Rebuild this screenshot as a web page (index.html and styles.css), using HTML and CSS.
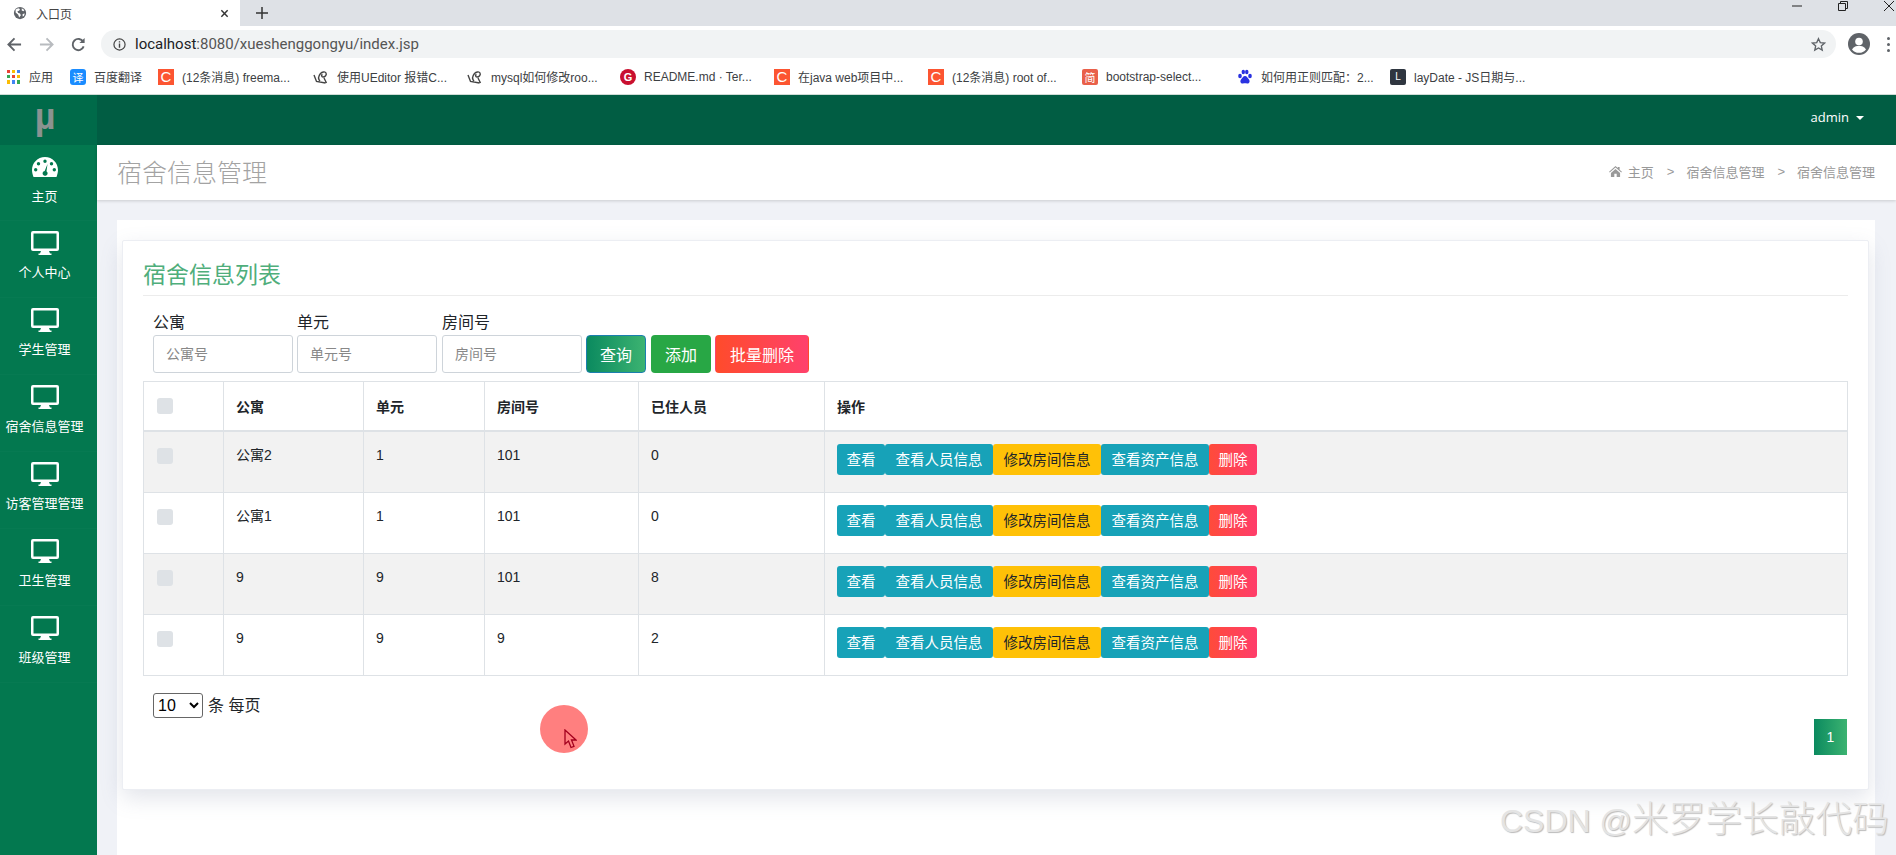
FILE: index.html
```html
<!DOCTYPE html>
<html lang="zh-CN">
<head>
    <meta charset="UTF-8">
    <title>入口页</title>
    <link rel="stylesheet" href="styles.css">
</head>
<body>
    <svg class="defs" width="0" height="0">
        <symbol id="monitor" viewBox="0 0 28 24">
            <path fill="#fff" d="M2 0h24a2 2 0 0 1 2 2v16a2 2 0 0 1-2 2H18l1 2.500h1.500V24h-13v-1.500H9l1-2.500H2a2 2 0 0 1-2-2V2a2 2 0 0 1 2-2zm.5 2.500v15h23v-15z"/>
        </symbol>
    </svg>

    <!-- barra del navegador -->
    <div class="tabstrip">
        <div class="tab">
            <svg class="globe" viewBox="0 0 16 16"><circle cx="8" cy="8" r="7" fill="#5f6368"/><path fill="#fff" d="M3 4l3-1.500 2 1-1 2-2 .5 1 2 2 .5 1 2-2 2.500-1-3-3-2.500zM10 2.500l3 2-1 1.500-2-1zM11 9l2.500-.5-1 3-1.500.5z"/></svg>
            <span class="tab-title">入口页</span>
            <svg class="tab-x" viewBox="0 0 10 10"><path d="M1.500 1.500l7 7m0-7l-7 7" stroke="#333" stroke-width="1.600"/></svg>
        </div>
        <svg class="tab-plus" viewBox="0 0 12 12"><path d="M6 0v12M0 6h12" stroke="#333" stroke-width="1.500"/></svg>
        <div class="win-btns">
            <svg viewBox="0 0 12 12"><path d="M1 6h10" stroke="#222" stroke-width="1"/></svg>
            <svg viewBox="0 0 12 12"><path d="M1.500 3.500h7v7h-7zM3.500 3.500v-2h7v7h-2" fill="none" stroke="#222" stroke-width="1"/></svg>
            <svg viewBox="0 0 12 12"><path d="M1 1l10 10m0-10L1 11" stroke="#222" stroke-width="1"/></svg>
        </div>
    </div>
    <div class="toolbar">
        <svg class="nav-icon" viewBox="0 0 16 16"><path d="M15 8H2m6-6.500L1.500 8 8 14.500" fill="none" stroke="#5f6368" stroke-width="2"/></svg>
        <svg class="nav-icon" viewBox="0 0 16 16"><path d="M1 8h13M8 1.500L14.500 8 8 14.500" fill="none" stroke="#b8bbbf" stroke-width="2"/></svg>
        <svg class="nav-icon" viewBox="0 0 16 16"><path d="M13.500 10a6 6 0 1 1-.5-5" fill="none" stroke="#5f6368" stroke-width="2"/><path fill="#5f6368" d="M14.500 1v5.500H9z"/></svg>
        <div class="omnibox">
            <svg class="info" viewBox="0 0 14 14"><circle cx="7" cy="7" r="6" fill="none" stroke="#444" stroke-width="1.300"/><path d="M7 6v4.500M7 3.500v1.300" stroke="#444" stroke-width="1.500"/></svg>
            <span class="url"><b>localhost</b>:8080/xueshenggongyu/index.jsp</span>
            <svg class="star" viewBox="0 0 16 16"><path d="M8 1.800l1.900 4.200 4.500.5-3.400 3 1 4.500L8 11.700 4 14l1-4.500-3.400-3 4.500-.5z" fill="none" stroke="#5f6368" stroke-width="1.400"/></svg>
        </div>
        <svg class="avatar" viewBox="0 0 22 22"><circle cx="11" cy="11" r="11" fill="#5f6368"/><circle cx="11" cy="8.500" r="3.800" fill="#fff"/><path fill="#fff" d="M4 16.500c1.500-3 4.500-3.800 7-3.800s5.500.8 7 3.800a9 9 0 0 1-14 0z"/></svg>
        <div class="dots"><i></i><i></i><i></i></div>
    </div>
    <div class="bookmarks">
        <div class="bm bm-apps">
            <div class="apps"><i class="r"></i><i class="y"></i><i class="b"></i><i class="g"></i><i class="r"></i><i class="y"></i><i class="y"></i><i class="b"></i><i class="g"></i></div>
            <span>应用</span>
        </div>
        <div class="bm"><span class="fav fav-blue">译</span><span>百度翻译</span></div>
        <div class="bm"><span class="fav fav-c">C</span><span>(12条消息) freema...</span></div>
        <div class="bm"><svg class="swirl" viewBox="0 0 16 16"><path d="M1 6l2.500 6.500 9 1.500M7 12c-2-2-1.500-5 .5-7.500C9 3 12 2 13 4c1 2-1 4-3 4-1.500 0-2-2-.5-2.500M11 9l2.500 5" fill="none" stroke="#444" stroke-width="1.400"/></svg><span>使用UEditor 报错C...</span></div>
        <div class="bm"><svg class="swirl" viewBox="0 0 16 16"><path d="M1 6l2.500 6.500 9 1.500M7 12c-2-2-1.500-5 .5-7.500C9 3 12 2 13 4c1 2-1 4-3 4-1.500 0-2-2-.5-2.500M11 9l2.500 5" fill="none" stroke="#444" stroke-width="1.400"/></svg><span>mysql如何修改roo...</span></div>
        <div class="bm"><span class="fav fav-g">G</span><span>README.md · Ter...</span></div>
        <div class="bm"><span class="fav fav-c">C</span><span>在java web项目中...</span></div>
        <div class="bm"><span class="fav fav-c">C</span><span>(12条消息) root of...</span></div>
        <div class="bm"><span class="fav fav-jian">简</span><span>bootstrap-select...</span></div>
        <div class="bm"><svg class="paw" viewBox="0 0 16 16"><g fill="#2932e1"><ellipse cx="3" cy="7" rx="1.800" ry="2.300"/><ellipse cx="6.300" cy="3" rx="1.700" ry="2.300"/><ellipse cx="9.800" cy="3" rx="1.700" ry="2.300"/><ellipse cx="13" cy="7" rx="1.800" ry="2.300"/><path d="M8 7c2 0 2.500 2 4 3.500 1.500 2 0 4.500-2 4-1-.2-3-.2-4 0-2 .5-3.500-2-2-4C5.500 9 6 7 8 7z"/></g></svg><span>如何用正则匹配：2...</span></div>
        <div class="bm"><span class="fav fav-lay">L</span><span>layDate - JS日期与...</span></div>
    </div>

    <!-- sistema -->
    <div class="app">
        <div class="logo">µ</div>
        <div class="topbar">
            <span class="admin">admin</span>
            <span class="caret"></span>
        </div>
        <nav class="sidebar">
            <a class="side-item">
                <svg class="side-icon" viewBox="0 0 28 24"><path fill="#fff" fill-rule="evenodd" d="M14 2C6.500 2 1 8 1 15c0 2.500.7 4.700 1.500 7h23c.8-2.300 1.500-4.500 1.500-7 0-7-5.500-13-13-13zM14 4.500a1.700 1.700 0 1 1 0 3.400 1.700 1.700 0 0 1 0-3.400zM7.500 7a1.700 1.700 0 1 1 0 3.400 1.700 1.700 0 0 1 0-3.400zM20.500 7a1.700 1.700 0 1 1 0 3.400 1.700 1.700 0 0 1 0-3.400zM4.700 13a1.700 1.700 0 1 1 0 3.400 1.700 1.700 0 0 1 0-3.400zM23.300 13a1.700 1.700 0 1 1 0 3.400 1.700 1.700 0 0 1 0-3.400zM16.500 9l-1 7.200c1 .8 1.300 1.800 1 2.800-.4 1.500-1.800 2-3 1.700-1.500-.4-2.200-1.700-1.800-3 .3-1 1.200-1.700 2-1.800z"/></svg>
                <span>主页</span>
            </a>
            <a class="side-item"><svg class="side-icon"><use href="#monitor"/></svg><span>个人中心</span></a>
            <a class="side-item"><svg class="side-icon"><use href="#monitor"/></svg><span>学生管理</span></a>
            <a class="side-item"><svg class="side-icon"><use href="#monitor"/></svg><span>宿舍信息管理</span></a>
            <a class="side-item"><svg class="side-icon"><use href="#monitor"/></svg><span>访客管理管理</span></a>
            <a class="side-item"><svg class="side-icon"><use href="#monitor"/></svg><span>卫生管理</span></a>
            <a class="side-item"><svg class="side-icon"><use href="#monitor"/></svg><span>班级管理</span></a>
        </nav>
        <main class="main">
            <div class="page-head">
                <h1 class="page-title">宿舍信息管理</h1>
                <div class="crumbs">
                    <svg class="home" viewBox="0 0 14 12"><path fill="#999" d="M7 0l2.500 2.200V1h2v3l2.500 2.300-.7.700L7 1.700 .7 7 0 6.300zM2 7.500L7 3.200l5 4.300V12H8.300V8.500H5.700V12H2z"/></svg>
                    <span>主页</span><span class="sep">&gt;</span><span>宿舍信息管理</span><span class="sep">&gt;</span><span>宿舍信息管理</span>
                </div>
            </div>
            <div class="panel">
                <div class="card">
                    <h2 class="card-title">宿舍信息列表</h2>
                    <form class="search">
                        <label class="field">公寓<input placeholder="公寓号"></label>
                        <label class="field">单元<input placeholder="单元号"></label>
                        <label class="field">房间号<input placeholder="房间号"></label>
                        <button type="button" class="btn btn-query">查询</button>
                        <button type="button" class="btn btn-add">添加</button>
                        <button type="button" class="btn btn-del">批量删除</button>
                    </form>
                    <table class="tabla">
                        <thead>
                            <tr>
                                <th class="c-check"><span class="check"></span></th>
                                <th class="c-a">公寓</th>
                                <th class="c-b">单元</th>
                                <th class="c-c">房间号</th>
                                <th class="c-d">已住人员</th>
                                <th>操作</th>
                            </tr>
                        </thead>
                        <tbody>
                            <tr>
                                <td><span class="check"></span></td><td>公寓2</td><td>1</td><td>101</td><td>0</td>
                                <td class="ops"><div class="op-row"><a class="op op-info">查看</a><a class="op op-info wide">查看人员信息</a><a class="op op-warn wide">修改房间信息</a><a class="op op-info wide">查看资产信息</a><a class="op op-del">删除</a></div></td>
                            </tr>
                            <tr>
                                <td><span class="check"></span></td><td>公寓1</td><td>1</td><td>101</td><td>0</td>
                                <td class="ops"><div class="op-row"><a class="op op-info">查看</a><a class="op op-info wide">查看人员信息</a><a class="op op-warn wide">修改房间信息</a><a class="op op-info wide">查看资产信息</a><a class="op op-del">删除</a></div></td>
                            </tr>
                            <tr>
                                <td><span class="check"></span></td><td>9</td><td>9</td><td>101</td><td>8</td>
                                <td class="ops"><div class="op-row"><a class="op op-info">查看</a><a class="op op-info wide">查看人员信息</a><a class="op op-warn wide">修改房间信息</a><a class="op op-info wide">查看资产信息</a><a class="op op-del">删除</a></div></td>
                            </tr>
                            <tr>
                                <td><span class="check"></span></td><td>9</td><td>9</td><td>9</td><td>2</td>
                                <td class="ops"><div class="op-row"><a class="op op-info">查看</a><a class="op op-info wide">查看人员信息</a><a class="op op-warn wide">修改房间信息</a><a class="op op-info wide">查看资产信息</a><a class="op op-del">删除</a></div></td>
                            </tr>
                        </tbody>
                    </table>
                    <div class="table-foot">
                        <div class="per-page">
                            <select class="size"><option>10</option></select>
                            <span>条 每页</span>
                        </div>
                        <a class="page-num">1</a>
                    </div>
                </div>
            </div>
        </main>
    </div>

    <div class="click-mark">
        <svg class="pointer" viewBox="0 0 13 20"><path d="M1 1v14l3.500-3 2.500 6.500 3-1.200-2.500-6.300H12z" fill="#ff8080" stroke="#a3001e" stroke-width="1.300"/></svg>
    </div>
    <div class="watermark"><span class="wm-latin">CSDN @</span>米罗学长敲代码</div>
</body>
</html>
```

FILE: styles.css
```css
* {
    box-sizing: border-box;
}
body {
    margin: 0;
    height: 855px;
    overflow: hidden;
    position: relative;
    display: flex;
    flex-direction: column;
    background: #fff;
    font-family: "Liberation Sans", "Noto Sans CJK SC", sans-serif;
    font-size: 14px;
    color: #212529;
}
.defs {
    position: absolute;
}
/* navegador */
.tabstrip {
    height: 26px;
    background: #dee1e6;
    display: flex;
    align-items: center;
}
.tab {
    width: 240px;
    height: 26px;
    background: #fff;
    display: flex;
    align-items: center;
    padding-left: 13px;
    font-size: 12px;
    color: #444;
}
.globe {
    width: 14px;
    height: 14px;
}
.tab-title {
    margin-left: 9px;
}
.tab-x {
    width: 9px;
    height: 9px;
    margin-left: auto;
    margin-right: 11px;
}
.tab-plus {
    width: 12px;
    height: 12px;
    margin-left: 16px;
}
.win-btns {
    margin-left: auto;
    align-self: flex-start;
    display: flex;
    gap: 34px;
    padding-right: 1px;
}
.win-btns svg {
    width: 12px;
    height: 12px;
}
.toolbar {
    height: 32px;
    padding-top: 4px;
    display: flex;
    align-items: center;
    background: #fff;
}
.nav-icon {
    width: 15px;
    height: 15px;
    margin-left: 7px;
    margin-right: 10px;
}
.nav-icon + .nav-icon {
    margin-left: 7px;
}
.omnibox {
    width: 1735px;
    height: 28px;
    margin-left: 5px;
    background: #f1f3f4;
    border-radius: 14px;
    display: flex;
    align-items: center;
    padding-left: 12px;
    padding-right: 10px;
}
.info {
    width: 13px;
    height: 13px;
}
.url {
    margin-left: 9px;
    font-family: "Roboto", sans-serif;
    font-size: 15px;
    color: #555;
}
.url b {
    font-weight: 400;
    color: #202124;
}
.star {
    width: 15px;
    height: 15px;
    margin-left: auto;
}
.avatar {
    width: 22px;
    height: 22px;
    margin-left: 12px;
}
.dots {
    margin-left: 17px;
    display: flex;
    flex-direction: column;
    gap: 3px;
}
.dots i {
    display: block;
    width: 3px;
    height: 3px;
    border-radius: 50%;
    background: #5f6368;
}
.bookmarks {
    height: 37px;
    padding-left: 7px;
    padding-top: 1px;
    display: grid;
    grid-template-columns: 63px 88px 155px 154px 153px 154px 154px 154px 155px 153px 140px;
    align-items: center;
    font-size: 12px;
    color: #3c4043;
    border-bottom: 1px solid #cfdcd6;
    white-space: nowrap;
}
.bm {
    display: flex;
    align-items: center;
    gap: 8px;
}
.apps {
    width: 14px;
    height: 14px;
    display: grid;
    grid-template-columns: repeat(3, 3px);
    gap: 2px;
}
.apps i {
    display: block;
}
.apps .r { background: #ea4335; }
.apps .y { background: #fbbc04; }
.apps .b { background: #4285f4; }
.apps .g { background: #34a853; }
.fav {
    width: 16px;
    height: 16px;
    display: flex;
    align-items: center;
    justify-content: center;
    color: #fff;
    font-size: 11px;
}
.fav-blue {
    background: #1a8cff;
    border-radius: 3px;
}
.fav-c {
    background: #fc5531;
    font-size: 15px;
}
.fav-g {
    background: #c9102f;
    border-radius: 50%;
    font-weight: bold;
}
.fav-jian {
    background: #e9604a;
    border-radius: 2px;
}
.fav-lay {
    background: #2f3640;
    border-radius: 2px;
    font-size: 10px;
}
.swirl,
.paw {
    width: 16px;
    height: 16px;
}
/* sistema */
.app {
    flex: 1;
    display: grid;
    grid-template-columns: 97px 1fr;
    grid-template-rows: 50px 1fr;
    min-height: 0;
}
.logo {
    background: #006a49;
    color: #8b9390;
    font-family: "Liberation Sans", sans-serif;
    font-size: 36px;
    font-weight: bold;
    display: flex;
    align-items: center;
    justify-content: center;
    padding: 0 7px 6px 0;
}
.topbar {
    background: #015d43;
    color: #fff;
    display: flex;
    align-items: center;
    justify-content: flex-end;
    padding: 0 32px 6px 0;
    font-family: "Open Sans", sans-serif;
    font-size: 13px;
}
.caret {
    margin-left: 7px;
    margin-top: 2px;
    border-top: 4px solid #fff;
    border-left: 4px solid transparent;
    border-right: 4px solid transparent;
}
.sidebar {
    background: #03784f;
    color: #fff;
    font-size: 13px;
}
.side-item {
    height: 77px;
    padding: 10px 8px 0 0;
    display: flex;
    flex-direction: column;
    align-items: center;
    gap: 9px;
    border-bottom: 1px solid rgba(255, 255, 255, 0.02);
    line-height: 18px;
}
.side-item:first-child {
    height: 76px;
}
.side-icon {
    width: 28px;
    height: 24px;
}
.main {
    background: #f0f2f7;
    display: flex;
    flex-direction: column;
    min-width: 0;
}
.page-head {
    height: 55px;
    background: #fff;
    box-shadow: 0 1px 3px rgba(0, 0, 0, 0.16);
    display: flex;
    align-items: center;
    justify-content: space-between;
    padding: 0 21px 3px 20px;
}
.page-title {
    margin: 0;
    font-size: 25px;
    font-weight: 300;
    color: #a3a3a3;
}
.crumbs {
    display: flex;
    align-items: center;
    font-size: 13px;
    color: #999;
}
.home {
    width: 13px;
    height: 11px;
    margin-right: 6px;
}
.sep {
    margin: 0 12px 0 13px;
}
.panel {
    flex: 1;
    margin: 20px 21px 0 20px;
    background: #fff;
    padding: 20px 6px 0 5px;
}
.card {
    background: #fff;
    border: 1px solid #eceef3;
    border-radius: 2px;
    box-shadow: 0 8px 22px rgba(110, 120, 150, 0.2);
    padding: 20px 20px 34px 20px;
    height: 550px;
}
.card-title {
    margin: 0;
    height: 35px;
    font-size: 23px;
    font-weight: 400;
    line-height: 28px;
    color: #4fae7b;
    border-bottom: 1px solid #ececec;
}
.search {
    margin: 15px 0 8px 10px;
    display: flex;
    align-items: flex-end;
    gap: 4px;
}
.field {
    width: 140px;
    font-size: 16px;
    line-height: 24px;
    display: block;
}
.field:nth-child(3) {
    margin-left: 1px;
}
.field input {
    display: block;
    width: 100%;
    height: 38px;
    padding: 0 12px;
    border: 1px solid #ced4da;
    border-radius: 3px;
    font-family: inherit;
    font-size: 14px;
}
.field input::placeholder {
    color: #888;
}
.btn {
    height: 38px;
    border: 1px solid transparent;
    border-radius: 4px;
    color: #fff;
    font-family: inherit;
    font-size: 16px;
    padding: 0;
}
.btn-query {
    width: 60px;
    background: linear-gradient(90deg, #0b8a5f, #3cb371);
    border-color: #1b7fae;
}
.btn-add {
    width: 60px;
    margin-left: 1px;
    background: #28a745;
}
.btn-del {
    width: 94px;
    background: linear-gradient(90deg, #ff4b2b, #ff416c);
}
.tabla {
    width: 100%;
    border-collapse: collapse;
    table-layout: fixed;
    border: 1px solid #dee2e6;
    line-height: 21px;
}
.tabla th,
.tabla td {
    border: 1px solid #dee2e6;
    padding: 12px;
    text-align: left;
    vertical-align: top;
}
.tabla th {
    height: 49px;
    padding-top: 15px;
    border-bottom-width: 2px;
    font-weight: bold;
}
.tabla td {
    height: 61px;
    padding-top: 13px;
}
.tabla tbody tr:nth-child(odd) {
    background: #f2f2f2;
}
.tabla th:first-child,
.tabla td:first-child {
    padding-top: 16px;
}
.tabla td.ops {
    padding-top: 12px;
}
.op-row {
    display: flex;
}
.c-check { width: 80px; }
.c-a { width: 140px; }
.c-b { width: 121px; }
.c-c { width: 154px; }
.c-d { width: 186px; }
.check {
    display: block;
    width: 16px;
    height: 16px;
    margin-left: 1px;
    border-radius: 3px;
    background: #dee2e6;
}
.op {
    width: 48px;
    height: 31px;
    border-radius: 3px;
    font-size: 14.500px;
    line-height: 33px;
    text-align: center;
    color: #fff;
}
.op.wide {
    width: 108px;
}
.op-info {
    background: #17a2b8;
}
.op-warn {
    background: #ffc107;
    color: #212529;
}
.op-del {
    background: linear-gradient(90deg, #ff4b3a, #ff3d6b);
}
.table-foot {
    display: flex;
    justify-content: space-between;
    align-items: flex-start;
    padding-left: 10px;
    padding-right: 1px;
}
.per-page {
    margin-top: 17px;
    display: flex;
    align-items: center;
    gap: 5px;
    font-size: 16px;
    line-height: 25px;
}
.size {
    width: 50px;
    height: 25px;
    font-family: "Liberation Sans", sans-serif;
    font-size: 16px;
    background: #fff;
    border: 1px solid #666;
    border-radius: 3px;
}
.page-num {
    margin-top: 43px;
    width: 33px;
    height: 36px;
    background: linear-gradient(90deg, #0b8a5f, #3cb371);
    color: #fff;
    text-align: center;
    line-height: 36px;
}
/* encima de la pagina */
.click-mark {
    position: absolute;
    left: 540px;
    top: 705px;
    width: 48px;
    height: 48px;
    border-radius: 50%;
    background: rgba(255, 0, 0, 0.5);
}
.pointer {
    position: absolute;
    left: 24px;
    top: 24px;
    width: 13px;
    height: 20px;
}
.watermark {
    position: absolute;
    left: 1500px;
    top: 796px;
    font-size: 36.700px;
    line-height: 48px;
    white-space: nowrap;
    font-weight: 300;
    color: #e4e4e4;
    text-shadow: 1px 1px 1px #bbb;
}
.wm-latin {
    font-size: 32px;
}
```
